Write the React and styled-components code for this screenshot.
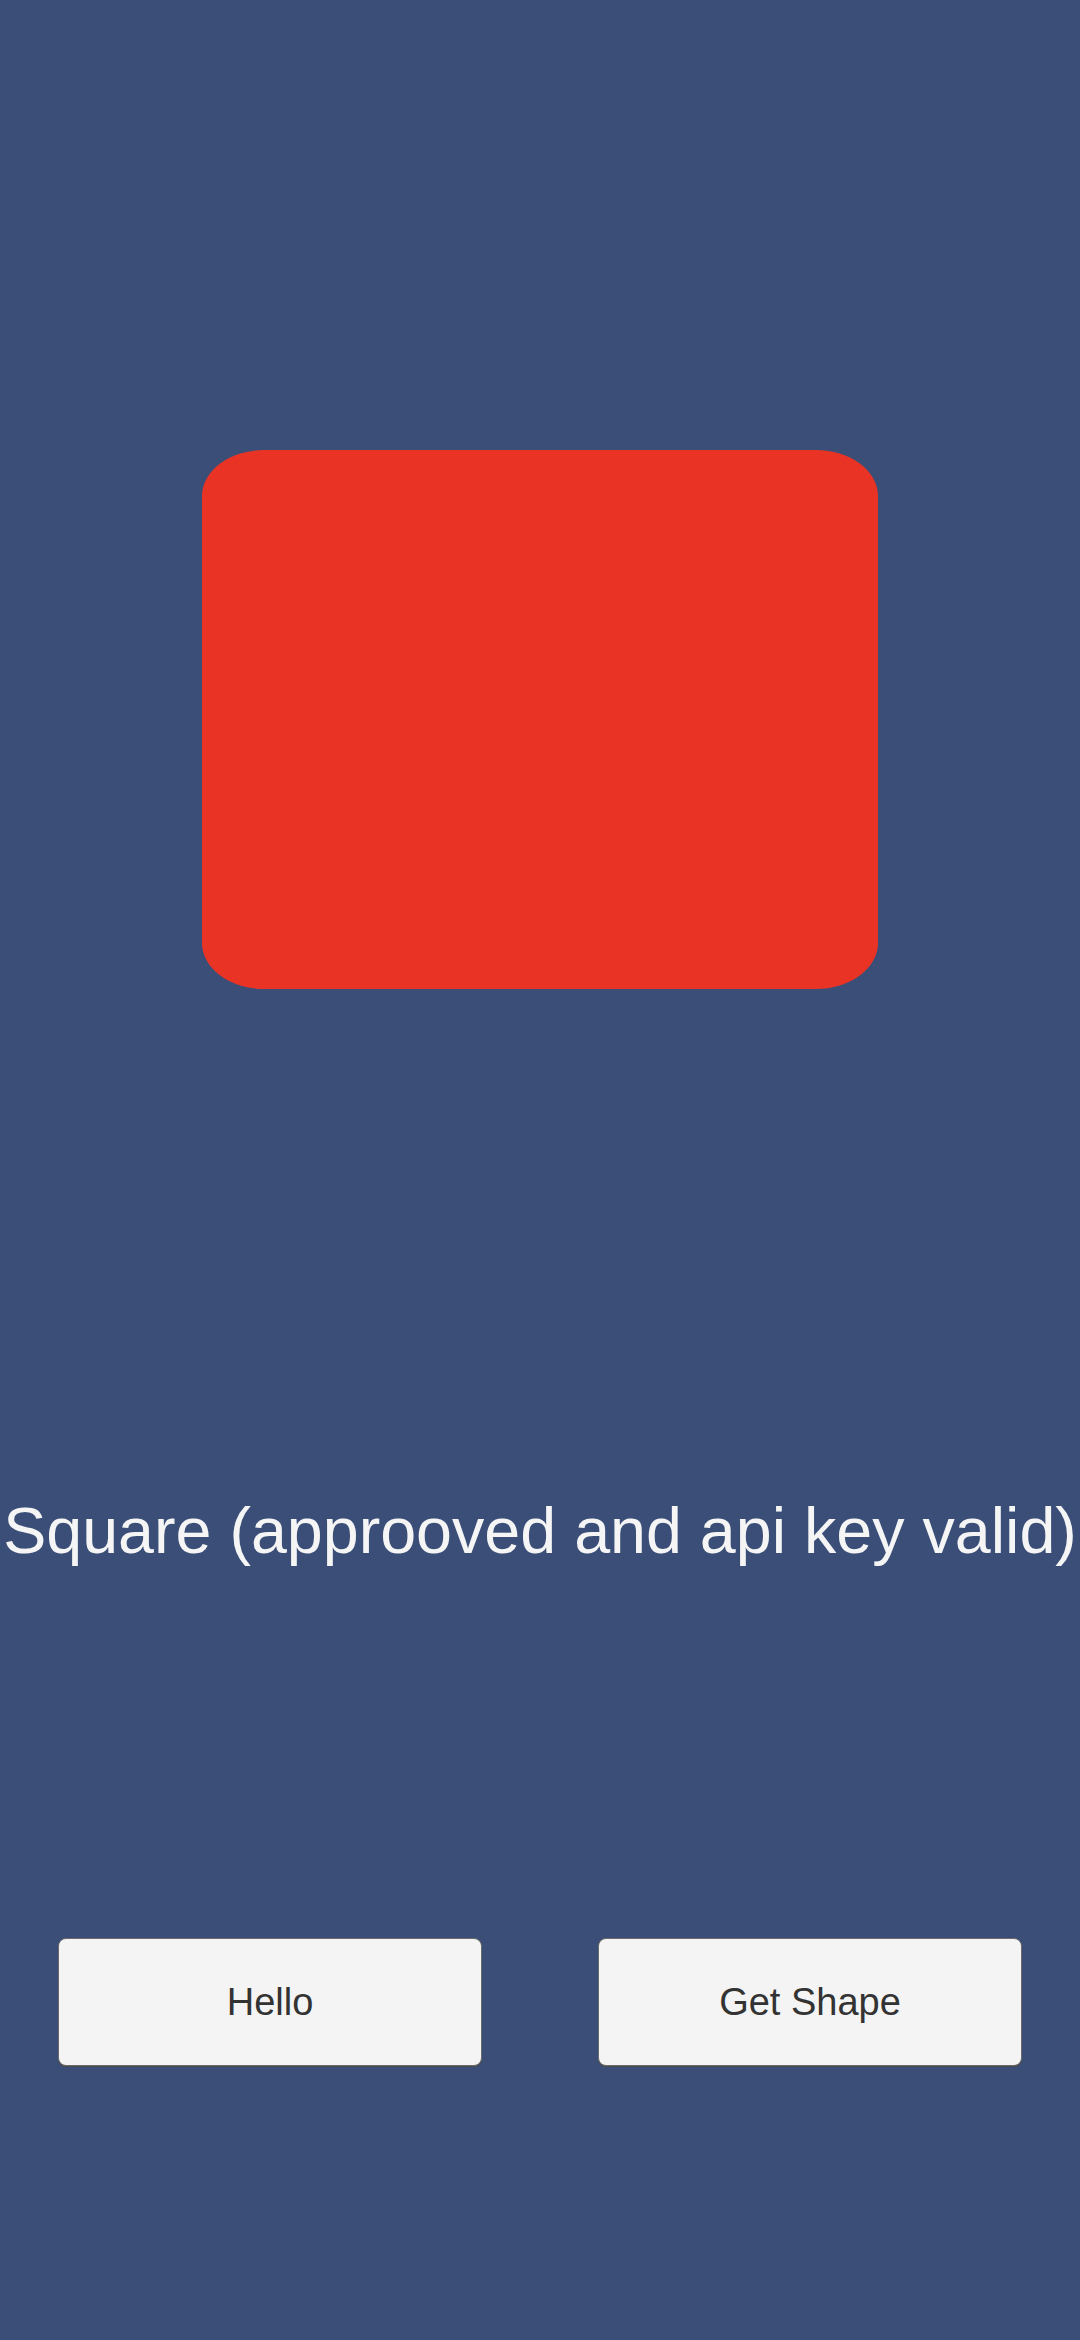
import React from "react";
import styled, { createGlobalStyle } from "styled-components";

const Global = createGlobalStyle`
  html, body { margin: 0; padding: 0; background: #3a4e78; }
  body { font-family: "Liberation Sans", Arial, sans-serif; }
`;

const Screen = styled.div`
  width: 1080px;
  height: 2340px;
  background: #3a4e78;
  display: flex;
  flex-direction: column;
  align-items: center;
  overflow: hidden;
`;

const Shape = styled.div`
  margin-top: 450px;
  width: 676px;
  height: 539px;
  background: #e93425;
  border-radius: 62px / 46px;
`;

const Status = styled.div`
  margin-top: 505px;
  width: 1080px;
  text-align: center;
  white-space: nowrap;
  color: #f5f5f5;
  font-size: 64.6px;
  line-height: 74px;
`;

const ButtonRow = styled.div`
  margin-top: 370px;
  width: 100%;
  box-sizing: border-box;
  padding: 0 58px;
  display: flex;
  justify-content: space-between;
`;

const Button = styled.button`
  width: 424px;
  height: 128px;
  box-sizing: border-box;
  background: #f4f4f4;
  border: 1px solid #6a6a6a;
  border-radius: 8px;
  box-shadow: 0 1px 0 #4a4a4a;
  color: #333333;
  font-family: "Liberation Sans", Arial, sans-serif;
  font-size: 38px;
  padding: 0;
  display: flex;
  align-items: center;
  justify-content: center;
`;

export default function App() {
  return (
    <>
      <Global />
      <Screen>
        <Shape />
        <Status>Square (approoved and api key valid)</Status>
        <ButtonRow>
          <Button>Hello</Button>
          <Button>Get Shape</Button>
        </ButtonRow>
      </Screen>
    </>
  );
}
